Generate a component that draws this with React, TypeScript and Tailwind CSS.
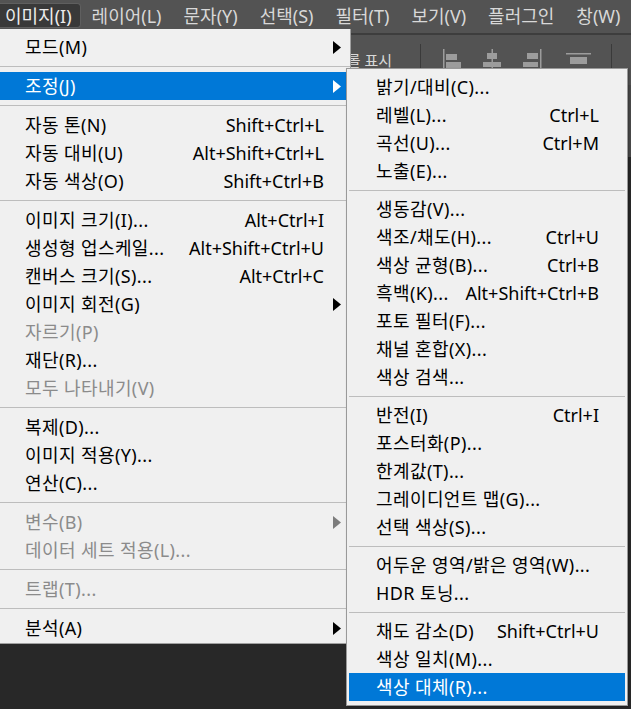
import React from "react";

type Item =
  | { sep: true }
  | {
      sep?: false;
      label: string;
      shortcut?: string;
      arrow?: boolean;
      disabled?: boolean;
      active?: boolean;
    };

const SEP: Item = { sep: true };

const imageMenu: Item[] = [
  { label: "모드(M)", arrow: true },
  SEP,
  { label: "조정(J)", arrow: true, active: true },
  SEP,
  { label: "자동 톤(N)", shortcut: "Shift+Ctrl+L" },
  { label: "자동 대비(U)", shortcut: "Alt+Shift+Ctrl+L" },
  { label: "자동 색상(O)", shortcut: "Shift+Ctrl+B" },
  SEP,
  { label: "이미지 크기(I)...", shortcut: "Alt+Ctrl+I" },
  { label: "생성형 업스케일...", shortcut: "Alt+Shift+Ctrl+U" },
  { label: "캔버스 크기(S)...", shortcut: "Alt+Ctrl+C" },
  { label: "이미지 회전(G)", arrow: true },
  { label: "자르기(P)", disabled: true },
  { label: "재단(R)..." },
  { label: "모두 나타내기(V)", disabled: true },
  SEP,
  { label: "복제(D)..." },
  { label: "이미지 적용(Y)..." },
  { label: "연산(C)..." },
  SEP,
  { label: "변수(B)", arrow: true, disabled: true },
  { label: "데이터 세트 적용(L)...", disabled: true },
  SEP,
  { label: "트랩(T)...", disabled: true },
  SEP,
  { label: "분석(A)", arrow: true },
];

const adjustMenu: Item[] = [
  { label: "밝기/대비(C)..." },
  { label: "레벨(L)...", shortcut: "Ctrl+L" },
  { label: "곡선(U)...", shortcut: "Ctrl+M" },
  { label: "노출(E)..." },
  SEP,
  { label: "생동감(V)..." },
  { label: "색조/채도(H)...", shortcut: "Ctrl+U" },
  { label: "색상 균형(B)...", shortcut: "Ctrl+B" },
  { label: "흑백(K)...", shortcut: "Alt+Shift+Ctrl+B" },
  { label: "포토 필터(F)..." },
  { label: "채널 혼합(X)..." },
  { label: "색상 검색..." },
  SEP,
  { label: "반전(I)", shortcut: "Ctrl+I" },
  { label: "포스터화(P)..." },
  { label: "한계값(T)..." },
  { label: "그레이디언트 맵(G)..." },
  { label: "선택 색상(S)..." },
  SEP,
  { label: "어두운 영역/밝은 영역(W)..." },
  { label: "HDR 토닝..." },
  SEP,
  { label: "채도 감소(D)", shortcut: "Shift+Ctrl+U" },
  { label: "색상 일치(M)..." },
  { label: "색상 대체(R)...", active: true },
];

const menubar = ["이미지(I)", "레이어(L)", "문자(Y)", "선택(S)", "필터(T)", "보기(V)", "플러그인", "창(W)"];

function Arrow({ color }: { color: string }) {
  return (
    <svg width="8" height="13" viewBox="0 0 8 13">
      <polygon points="0,0 8,6.5 0,13" fill={color} />
    </svg>
  );
}

function MenuList({ items, sepClass, inset, padLeft }: { items: Item[]; sepClass: string; inset: string; padLeft: string }) {
  return (
    <>
      {items.map((it, i) => {
        if (it.sep) {
          return (
            <div key={i} className={`flex items-center ${sepClass} ${inset}`}>
              <div className="h-px w-full bg-[#bdbdbd]" />
            </div>
          );
        }
        const textColor = it.active ? "text-white" : it.disabled ? "text-[#8b8b8b]" : "text-black";
        const arrowColor = it.active ? "#ffffff" : it.disabled ? "#7c7c7c" : "#000000";
        return (
          <div
            key={i}
            className={`flex h-[28px] items-center ${inset} ${padLeft} ${textColor} ${it.active ? "bg-[#0078d7]" : ""}`}
          >
            <span className="flex-1 whitespace-nowrap tracking-[0.4px]">{it.label}</span>
            {it.shortcut && <span className="whitespace-nowrap">{it.shortcut}</span>}
            <span className="flex w-[26px] items-center pl-[9px]">{it.arrow && <Arrow color={arrowColor} />}</span>
          </div>
        );
      })}
    </>
  );
}

function AlignIcon({ kind }: { kind: "left" | "center" | "right" | "top" }) {
  const c = "#9c9c9c";
  return (
    <svg width="26" height="24" viewBox="0 0 26 24">
      {kind === "left" && (
        <>
          <rect x="3" y="1" width="1.5" height="22" fill={c} />
          <rect x="6" y="6" width="11" height="6" fill={c} />
          <rect x="6" y="14" width="15" height="6" fill={c} />
        </>
      )}
      {kind === "center" && (
        <>
          <rect x="12.5" y="1" width="1.5" height="22" fill={c} />
          <rect x="8" y="5" width="10" height="6" fill={c} />
          <rect x="4" y="14" width="18" height="5" fill={c} />
        </>
      )}
      {kind === "right" && (
        <>
          <rect x="22" y="1" width="1.5" height="22" fill={c} />
          <rect x="9" y="5" width="11" height="6" fill={c} />
          <rect x="5" y="14" width="15" height="5" fill={c} />
        </>
      )}
      {kind === "top" && (
        <>
          <rect x="0" y="5" width="25" height="1.5" fill={c} />
          <rect x="4" y="9" width="17" height="7" fill={c} />
        </>
      )}
    </svg>
  );
}

export default function App() {
  return (
    <div className="relative h-[709px] w-[631px] overflow-hidden bg-[#282828] font-['Noto_Sans','Noto_Sans_CJK_KR',sans-serif] text-[18px]">
      {/* menubar */}
      <div className="flex h-[33px] items-start bg-[#535353] pt-[3px] text-[#d8d8d8]">
        {menubar.map((m, i) => (
          <div
            key={m}
            className={`flex h-[25px] items-center whitespace-nowrap leading-none ${
              i === 0
                ? "rounded-r-[4px] border border-l-0 border-[#5f5f5f] bg-[#393939] pl-[5px] pr-[8px] text-[#ececec]"
                : "px-[11px]"
            }`}
          >
            {m}
          </div>
        ))}
      </div>
      <div className="h-[2px] bg-[#3d3d3d]" />

      {/* options bar */}
      <div className="flex h-[50px] items-center bg-[#535353] text-[15px] text-[#d8d8d8]">
        <div className="w-[392px] whitespace-nowrap text-right">변형 컨트롤 표시</div>
        <div className="ml-[28px] h-[32px] w-px bg-[#3a3a3a]" />
        <div className="ml-[19px] flex items-center gap-[13px]">
          <AlignIcon kind="left" />
          <AlignIcon kind="center" />
          <AlignIcon kind="right" />
        </div>
        <div className="ml-[22px]">
          <AlignIcon kind="top" />
        </div>
        <div className="ml-[19px] h-[32px] w-px bg-[#3a3a3a]" />
      </div>
      <div className="flex h-[72px] justify-end">
        <div className="w-[6px] bg-[#4a4a4a]" />
      </div>

      {/* image menu */}
      <div className="absolute left-0 top-[29px] w-[351px] border-b border-r border-[#a0a0a0] bg-[#f0f0f0] pb-[1px] pt-[4px]">
        <MenuList items={imageMenu} sepClass="h-[11px]" inset="" padLeft="pl-[25px]" />
      </div>

      {/* adjustments submenu */}
      <div className="absolute left-[346px] top-[68px] w-[282px] border border-[#999999] bg-[#f0f0f0] pb-[4px] pt-[4px] shadow-[1px_1px_2px_rgba(0,0,0,0.3)]">
        <MenuList items={adjustMenu} sepClass="h-[10px]" inset="mx-[2px]" padLeft="pl-[27px]" />
      </div>
    </div>
  );
}
